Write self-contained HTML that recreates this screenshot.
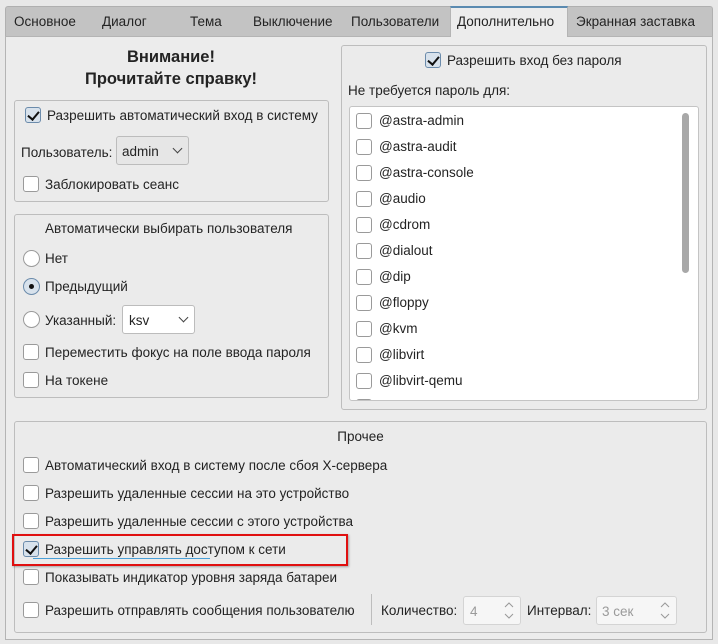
<!DOCTYPE html>
<html><head><meta charset="utf-8"><style>
*{box-sizing:border-box;margin:0;padding:0}
body{width:718px;height:644px;background:#e8e8e8;font-family:"Liberation Sans","DejaVu Sans",sans-serif;font-size:13.5px;color:#232323;position:relative;overflow:hidden}
.a{position:absolute;white-space:nowrap}
.tabbar{left:5px;top:6px;width:708px;height:30px;background:#c3c3c3;border:1px solid #b0b0b0;border-bottom:none;border-radius:3px 3px 0 0}
.tab{top:7px;height:30px;line-height:30px;font-size:13.5px}
.panel{left:5px;top:36px;width:708px;height:604px;background:#ececec;border:1px solid #b4b4b4}
.grp{border:1px solid #bdbdbd;border-radius:3px;background:#ebebeb}
.cb{width:16px;height:16px;border:1px solid #9a9a9a;border-radius:3px;background:#fff}
.cb.on{background:#d8e2ec;border-color:#6b8bab}
.cb.on:after{content:"";position:absolute;left:4px;top:1px;width:5px;height:9px;border:solid #111;border-width:0 2px 2px 0;transform:rotate(40deg)}
.rb{width:17px;height:17px;border:1px solid #9a9a9a;border-radius:50%;background:#fff}
.rb.on{background:#d8e2ec;border-color:#6b8bab}
.rb.on:after{content:"";position:absolute;left:5px;top:5px;width:5px;height:5px;border-radius:50%;background:#111}
.combo{border:1px solid #bcbcbc;border-radius:3px;background:#e6e6e6}
.chev{position:absolute;width:7px;height:7px;border:solid #444;border-width:0 1.3px 1.3px 0;transform:rotate(45deg)}
.lt{line-height:16px;margin-top:1px}
</style></head><body>
<div class="a tabbar"></div>
<div class="a tab" style="left:14px">Основное</div>
<div class="a tab" style="left:102px">Диалог</div>
<div class="a tab" style="left:190px">Тема</div>
<div class="a tab" style="left:253px">Выключение</div>
<div class="a tab" style="left:351px">Пользователи</div>
<div class="a" style="left:450px;top:6px;width:118px;height:31px;background:#ececec;border:1px solid #b4b4b4;border-top:2px solid #5a8ab0;border-bottom:none;z-index:2"></div>
<div class="a tab" style="left:457px;z-index:3">Дополнительно</div>
<div class="a tab" style="left:576px">Экранная заставка</div>
<div class="a panel"></div>

<div class="a" style="left:14px;top:46px;width:314px;text-align:center;font-weight:bold;font-size:16.5px;line-height:22px">Внимание!<br>Прочитайте справку!</div>

<div class="a grp" style="left:14px;top:100px;width:315px;height:102px"></div>
<div class="a cb on" style="left:25px;top:107px"></div>
<div class="a lt" style="left:47px;top:107px">Разрешить автоматический вход в систему</div>
<div class="a lt" style="left:21px;top:144px">Пользователь:</div>
<div class="a combo" style="left:116px;top:136px;width:73px;height:29px"></div>
<div class="a lt" style="left:122px;top:143px">admin</div>
<div class="a chev" style="left:174px;top:145px"></div>
<div class="a cb" style="left:23px;top:176px"></div>
<div class="a lt" style="left:45px;top:176px">Заблокировать сеанс</div>

<div class="a grp" style="left:14px;top:214px;width:315px;height:184px"></div>
<div class="a lt" style="left:45px;top:220px">Автоматически выбирать пользователя</div>
<div class="a rb" style="left:23px;top:250px"></div>
<div class="a lt" style="left:45px;top:250px">Нет</div>
<div class="a rb on" style="left:23px;top:278px"></div>
<div class="a lt" style="left:45px;top:278px">Предыдущий</div>
<div class="a rb" style="left:23px;top:311px"></div>
<div class="a lt" style="left:45px;top:312px">Указанный:</div>
<div class="a combo" style="left:122px;top:305px;width:73px;height:29px;background:#fff"></div>
<div class="a lt" style="left:129px;top:312px">ksv</div>
<div class="a chev" style="left:180px;top:314px"></div>
<div class="a cb" style="left:23px;top:344px"></div>
<div class="a lt" style="left:45px;top:344px">Переместить фокус на поле ввода пароля</div>
<div class="a cb" style="left:23px;top:372px"></div>
<div class="a lt" style="left:45px;top:372px">На токене</div>

<div class="a grp" style="left:341px;top:45px;width:366px;height:365px"></div>
<div class="a cb on" style="left:425px;top:52px"></div>
<div class="a lt" style="left:447px;top:52px">Разрешить вход без пароля</div>
<div class="a lt" style="left:348px;top:82px">Не требуется пароль для:</div>
<div class="a" style="left:349px;top:106px;width:350px;height:295px;background:#fff;border:1px solid #c4c4c4;border-radius:3px;overflow:hidden">
<div class="a" style="left:332px;top:6px;width:7px;height:160px;background:#a8a8a8;border-radius:4px"></div>
<div class="a cb" style="left:6px;top:6px"></div><div class="a lt" style="left:29px;top:5px">@astra-admin</div>
<div class="a cb" style="left:6px;top:32px"></div><div class="a lt" style="left:29px;top:31px">@astra-audit</div>
<div class="a cb" style="left:6px;top:58px"></div><div class="a lt" style="left:29px;top:57px">@astra-console</div>
<div class="a cb" style="left:6px;top:84px"></div><div class="a lt" style="left:29px;top:83px">@audio</div>
<div class="a cb" style="left:6px;top:110px"></div><div class="a lt" style="left:29px;top:109px">@cdrom</div>
<div class="a cb" style="left:6px;top:136px"></div><div class="a lt" style="left:29px;top:135px">@dialout</div>
<div class="a cb" style="left:6px;top:162px"></div><div class="a lt" style="left:29px;top:161px">@dip</div>
<div class="a cb" style="left:6px;top:188px"></div><div class="a lt" style="left:29px;top:187px">@floppy</div>
<div class="a cb" style="left:6px;top:214px"></div><div class="a lt" style="left:29px;top:213px">@kvm</div>
<div class="a cb" style="left:6px;top:240px"></div><div class="a lt" style="left:29px;top:239px">@libvirt</div>
<div class="a cb" style="left:6px;top:266px"></div><div class="a lt" style="left:29px;top:265px">@libvirt-qemu</div>
<div class="a cb" style="left:6px;top:292px"></div>
</div>

<div class="a grp" style="left:14px;top:421px;width:693px;height:212px"></div>
<div class="a lt" style="left:14px;top:428px;width:693px;text-align:center">Прочее</div>
<div class="a cb" style="left:23px;top:457px"></div><div class="a lt" style="left:45px;top:457px">Автоматический вход в систему после сбоя X-сервера</div>
<div class="a cb" style="left:23px;top:485px"></div><div class="a lt" style="left:45px;top:485px">Разрешить удаленные сессии на это устройство</div>
<div class="a cb" style="left:23px;top:513px"></div><div class="a lt" style="left:45px;top:513px">Разрешить удаленные сессии с этого устройства</div>
<div class="a" style="left:12px;top:534px;width:336px;height:32px;border:2px solid #e01010;box-shadow:1px 1px 2px rgba(0,0,0,.3)"></div>
<div class="a cb on" style="left:23px;top:541px"></div><div class="a lt" style="left:45px;top:541px">Разрешить управлять доступом к сети</div>
<div class="a" style="left:33px;top:558px;width:177px;height:1px;background:#4aa0d8"></div>
<div class="a cb" style="left:23px;top:569px"></div><div class="a lt" style="left:45px;top:569px">Показывать индикатор уровня заряда батареи</div>
<div class="a cb" style="left:23px;top:602px"></div><div class="a lt" style="left:45px;top:602px">Разрешить отправлять сообщения пользователю</div>
<div class="a" style="left:371px;top:594px;width:1px;height:31px;background:#bdbdbd"></div>
<div class="a lt" style="left:381px;top:602px">Количество:</div>
<div class="a" style="left:463px;top:596px;width:58px;height:29px;background:#f6f6f6;border:1px solid #d4d4d4;border-radius:3px"></div>
<div class="a lt" style="left:470px;top:603px;color:#9a9a9a">4</div>
<svg class="a" style="left:503px;top:601px" width="12" height="20"><path d="M2 6 L6 2 L10 6 M2 13 L6 17 L10 13" fill="none" stroke="#999" stroke-width="1"/></svg>
<div class="a lt" style="left:527px;top:602px">Интервал:</div>
<div class="a" style="left:596px;top:596px;width:81px;height:29px;background:#f6f6f6;border:1px solid #d4d4d4;border-radius:3px"></div>
<div class="a lt" style="left:602px;top:603px;color:#9a9a9a">3 сек</div>
<svg class="a" style="left:659px;top:601px" width="12" height="20"><path d="M2 6 L6 2 L10 6 M2 13 L6 17 L10 13" fill="none" stroke="#999" stroke-width="1"/></svg>
</body></html>
